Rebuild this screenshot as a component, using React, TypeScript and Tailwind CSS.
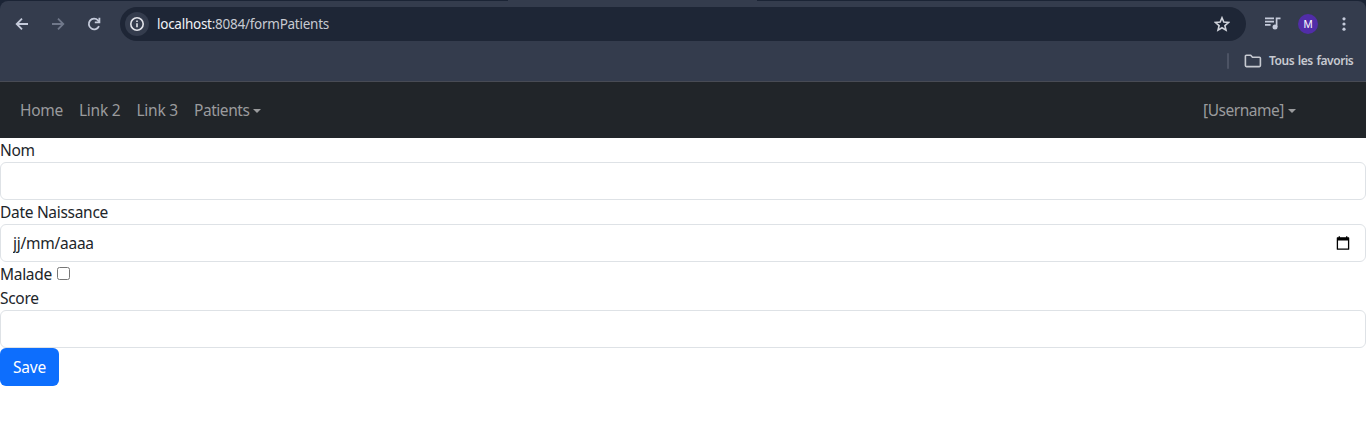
import React from "react";

const navLink = "flex h-10 items-center whitespace-nowrap text-[15.5px] tracking-[-0.25px] text-[#9a9b9d]";
const label = "h-6 whitespace-nowrap text-[15.5px] leading-6 tracking-[-0.3px]";
const field =
  "block h-[38px] w-full rounded-md border border-[#dee2e6] bg-white px-3 text-[15.5px] tracking-[-0.25px] text-[#212529] outline-none";

function Caret() {
  return (
    <span className="ml-1 h-0 w-0 border-x-[4.8px] border-t-[4.8px] border-x-transparent border-t-[#9a9b9d]" />
  );
}

function BrowserChrome() {
  return (
    <header className="h-[82px] bg-[#1b2435] font-['Noto_Sans','Open_Sans',sans-serif]">
      <div className="flex h-px justify-center pr-[101px]">
        <div className="w-[249px] bg-[#343c4d]" />
      </div>
      <div className="h-[81px] rounded-t-lg border-b border-[#484b54] bg-[#343c4d]">
        <div className="flex h-[46px] items-center pl-[14px]">
          <svg width="16" height="16" viewBox="0 0 16 16" fill="none" stroke="#c5cbdb" strokeWidth="1.8" className="shrink-0">
            <path d="M14 8H3M8 2.7 2.7 8 8 13.3" />
          </svg>
          <svg width="16" height="16" viewBox="0 0 16 16" fill="none" stroke="#70788a" strokeWidth="1.8" className="ml-5 shrink-0">
            <path d="M2 8h11M8 2.7 13.3 8 8 13.3" />
          </svg>
          <svg width="16" height="16" viewBox="0 0 16 16" fill="none" stroke="#c5cbdb" strokeWidth="1.8" className="ml-5 shrink-0">
            <path d="M13 10.1A5.3 5.3 0 1 1 12 4.4L13.3 6" />
            <path d="M13.4 1.8v4.6H8.8" />
          </svg>
          <div className="ml-[18px] flex h-[34px] w-[1126px] shrink-0 items-center rounded-full bg-[#1e2636] pl-[5px] pr-4">
            <div className="flex h-6 w-6 items-center justify-center rounded-full bg-[#343c4d]">
              <svg width="16" height="16" viewBox="0 0 16 16" fill="none" stroke="#e2e4ea" strokeWidth="1.6">
                <circle cx="8" cy="8" r="6.2" />
                <path d="M8 7.2v4M8 4.5v1.6" />
              </svg>
            </div>
            <div className="ml-2 flex-1 whitespace-nowrap text-[13.5px] tracking-[-0.26px] text-[#c7cad1]">
              <span className="text-[#f0f2f7]">localhost</span>:8084/formPatients
            </div>
            <svg width="16" height="16" viewBox="0 0 16 16" fill="none" stroke="#d0d3db" strokeWidth="1.6">
              <path d="m8 1.8 1.8 4.3 4.7.4-3.6 3.1 1.1 4.6L8 11.8l-4 2.4 1.1-4.6-3.6-3.1 4.7-.4Z" />
            </svg>
          </div>
          <svg width="18" height="16" viewBox="0 0 18 16" fill="none" stroke="#c5cbdb" strokeWidth="1.7" className="ml-[18px] shrink-0">
            <path d="M1 2.4h9M1 5.7h9M1 8.9h5.6M12.6 11V2.4h3.9" />
            <circle cx="11" cy="11" r="2.5" fill="#c5cbdb" stroke="none" />
          </svg>
          <div className="ml-4 flex h-5 w-5 shrink-0 items-center justify-center rounded-full bg-[#512da8] font-['Liberation_Sans',sans-serif] text-[11px] text-white">
            M
          </div>
          <svg width="4" height="16" viewBox="0 0 4 16" fill="#c5cbdb" className="ml-6 shrink-0">
            <circle cx="2" cy="2.8" r="1.6" />
            <circle cx="2" cy="8" r="1.6" />
            <circle cx="2" cy="13.2" r="1.6" />
          </svg>
        </div>
        <div className="flex h-7 items-center justify-end pr-[15px]">
          <div className="h-4 w-0.5 rounded bg-[#4c5364]" />
          <svg width="18" height="14" viewBox="0 0 18 14" fill="none" stroke="#c7cad1" strokeWidth="1.6" strokeLinejoin="round" className="ml-[15px]">
            <path d="M2.4 1.2h4.3l1.8 2h6.9c.6 0 1 .4 1 1v7.4c0 .6-.4 1-1 1H2.4c-.6 0-1-.4-1-1V2.2c0-.6.4-1 1-1Z" />
          </svg>
          <div className="ml-[7px] w-[82px] whitespace-nowrap text-[12px] font-semibold tracking-[-0.45px] text-[#c7cad1] [word-spacing:1px]">
            Tous les favoris
          </div>
        </div>
      </div>
    </header>
  );
}

function Navbar() {
  return (
    <nav className="flex h-14 items-center bg-[#212529] pl-5 pt-px">
      <a className={`${navLink} w-[59px]`}>Home</a>
      <a className={`${navLink} w-[57.5px]`}>Link 2</a>
      <a className={`${navLink} w-[57.5px]`}>Link 3</a>
      <a className={navLink}>
        <span className="w-[55px] tracking-[-0.45px]">Patients</span>
        <Caret />
      </a>
      <a className={`${navLink} ml-auto mr-[70px]`}>
        <span className="w-[81px] tracking-[-0.47px]">[Username]</span>
        <Caret />
      </a>
    </nav>
  );
}

export default function App() {
  return (
    <div className="h-[448px] overflow-hidden bg-white font-['Noto_Sans','Open_Sans',sans-serif] text-[#212529]">
      <BrowserChrome />
      <Navbar />
      <form>
        <label htmlFor="nom" className={`${label} block`}>Nom</label>
        <input id="nom" type="text" className={field} />
        <label htmlFor="naissance" className={`${label} block`}>Date Naissance</label>
        <div className={`${field} flex! items-center justify-between`}>
          <input
            id="naissance"
            type="text"
            placeholder="jj/mm/aaaa"
            className="w-40 bg-transparent pt-px tracking-[-0.25px] outline-none placeholder:text-[#212529]"
          />
          <svg width="14" height="14" viewBox="0 0 14 14" fill="none" stroke="black" className="mr-[3px]">
            <path d="M1.4 2h11.2v11.2H1.4Z" strokeWidth="1.3" strokeLinejoin="round" />
            <path d="M1 3.2h12" strokeWidth="2.6" />
            <path d="M3.3.2v2M10.7.2v2" strokeWidth="1.3" />
          </svg>
        </div>
        <div className="flex h-6 items-center">
          <label htmlFor="malade" className={`${label} w-[57px]`}>Malade</label>
          <input id="malade" type="checkbox" className="mb-px h-[13px] w-[13px] appearance-none rounded-[2.5px] border border-[#767676] bg-white" />
        </div>
        <label htmlFor="score" className={`${label} block`}>Score</label>
        <input id="score" type="text" className={field} />
        <button type="button" className="block h-[38px] w-[59px] rounded-md bg-[#0d6efd] pt-px text-center text-[15.5px] tracking-[-0.25px] text-white">
          Save
        </button>
      </form>
    </div>
  );
}
